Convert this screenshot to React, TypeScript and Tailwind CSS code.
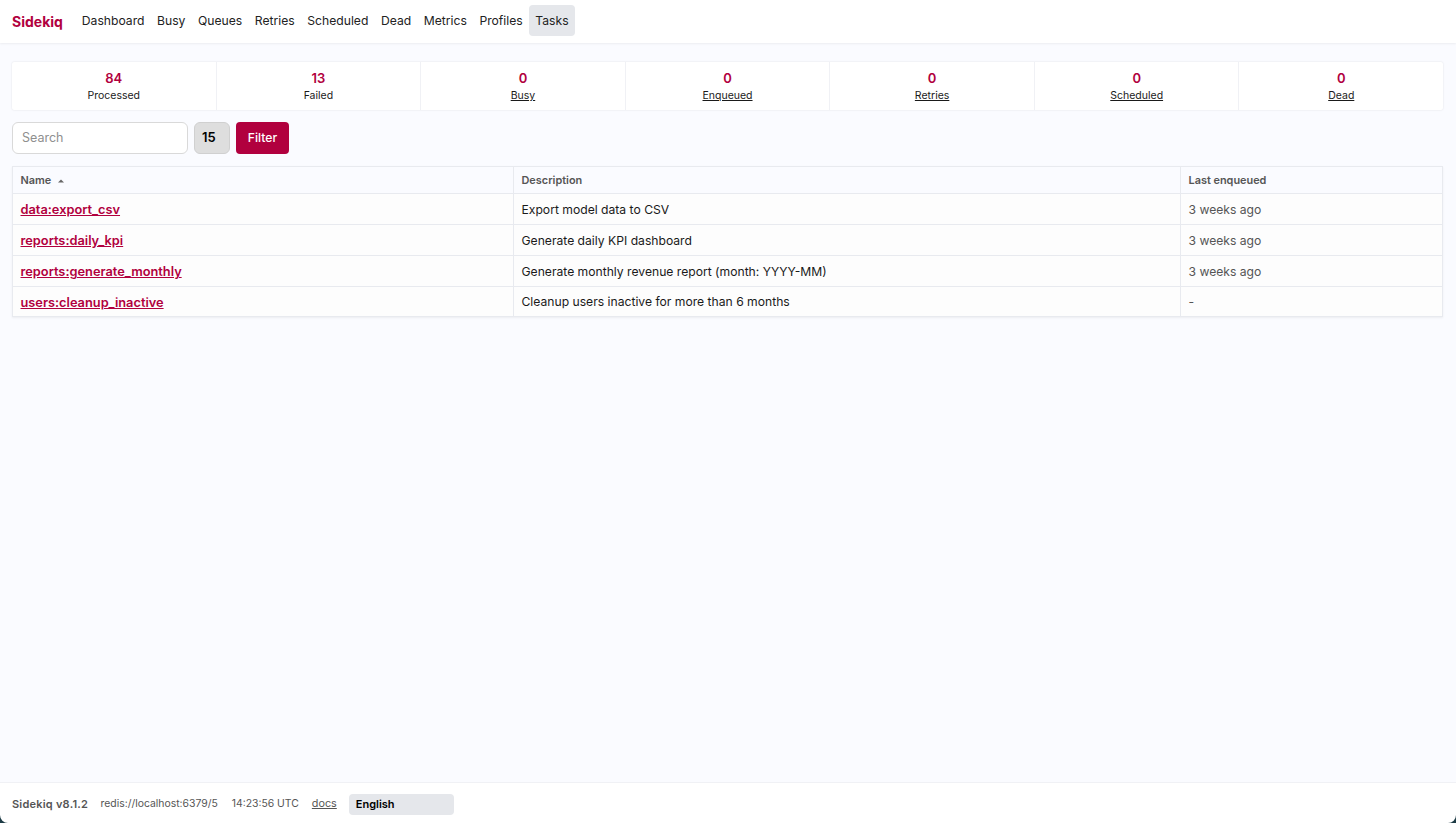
const navItems = ["Dashboard", "Busy", "Queues", "Retries", "Scheduled", "Dead", "Metrics", "Profiles"];

const stats = [
  { value: "84", label: "Processed", link: false },
  { value: "13", label: "Failed", link: false },
  { value: "0", label: "Busy", link: true },
  { value: "0", label: "Enqueued", link: true },
  { value: "0", label: "Retries", link: true },
  { value: "0", label: "Scheduled", link: true },
  { value: "0", label: "Dead", link: true },
];

const tasks = [
  { name: "data:export_csv", description: "Export model data to CSV", last: "3 weeks ago" },
  { name: "reports:daily_kpi", description: "Generate daily KPI dashboard", last: "3 weeks ago" },
  { name: "reports:generate_monthly", description: "Generate monthly revenue report (month: YYYY-MM)", last: "3 weeks ago" },
  { name: "users:cleanup_inactive", description: "Cleanup users inactive for more than 6 months", last: "-" },
];

export default function App() {
  return (
    <div className="relative flex h-[823px] flex-col overflow-hidden bg-[#fafbff] font-['Inter',sans-serif] text-[12.15px] text-[#1a1a1a]">
      <header className="flex h-[43px] items-center bg-white pb-[1px] pl-3 shadow-[0_1px_2px_rgba(0,0,0,0.06)]">
        <span className="mr-[12.7px] text-[14px] font-bold text-[#b1003e]">Sidekiq</span>
        <nav className="flex items-center">
          {navItems.map((item) => (
            <a key={item} className="px-[6.3px] py-2 text-[#222]">
              {item}
            </a>
          ))}
          <a className="flex h-[31px] items-center rounded bg-[#e5e7eb] px-[6.3px] text-[#222]">Tasks</a>
        </nav>
      </header>

      <main className="flex-1 pl-3 pr-[13px] pt-[19px]">
        <div className="flex h-[48px] rounded-[2px] bg-white shadow-[0_0_2px_rgba(0,0,0,0.12)]">
          {stats.map((stat) => (
            <div key={stat.label} className="flex flex-1 flex-col items-center justify-center border-r border-[#f0f1f5] last:border-r-0">
              <span className="pt-[1px] text-[13px] leading-[17px] font-semibold text-[#b1003e]">{stat.value}</span>
              <span className={`mt-[1px] text-[10.5px] leading-[15px] ${stat.link ? "underline" : ""}`}>{stat.label}</span>
            </div>
          ))}
        </div>

        <div className="mt-3 flex gap-1.5">
          <input
            placeholder="Search"
            className="h-8 w-[176px] rounded-md border border-[#d9d9d9] bg-white px-[9px] pb-[1px] text-[12.5px] placeholder:text-[#8f8f8f]"
          />
          <div className="flex h-8 w-9 items-center rounded-md border border-[#d0d0d0] bg-[#dedede] pl-[7px] text-[13px] font-semibold text-black">15</div>
          <button className="h-8 w-[53px] rounded bg-[#b1003e] text-[12.2px] font-medium text-white">Filter</button>
        </div>

        <table className="mt-3 w-full table-fixed border-collapse bg-[#fdfdfd] shadow-[0_1px_2px_rgba(0,0,0,0.06)]">
          <colgroup>
            <col className="w-[501px]" />
            <col className="w-[667px]" />
            <col />
          </colgroup>
          <thead>
            <tr className="h-[27px] text-left text-[10.9px] text-[#555]">
              <th className="border border-[#e8eaef] bg-[#fafbff] pl-[7.5px] font-semibold">
                Name
                <svg className="ml-[7px] inline-block align-middle" width="6" height="4" viewBox="0 0 6 4">
                  <path d="M3 0.5 L6 3.5 H0 Z" fill="#666" />
                </svg>
              </th>
              <th className="border border-[#e8eaef] bg-[#fafbff] pl-[7.5px] font-semibold">Description</th>
              <th className="border border-[#e8eaef] bg-[#fafbff] pl-[7.5px] font-semibold">Last enqueued</th>
            </tr>
          </thead>
          <tbody>
            {tasks.map((task) => (
              <tr key={task.name} className="h-[31px] last:h-[30px]">
                <td className="border border-[#e8eaef] pl-[7.5px] pt-[2px] text-[12.8px] font-semibold text-[#b1003e] underline">{task.name}</td>
                <td className="border border-[#e8eaef] pl-[7.5px] pt-[2px]">{task.description}</td>
                <td className="border border-[#e8eaef] pl-[7.5px] pt-[2px] text-[#555]">{task.last}</td>
              </tr>
            ))}
          </tbody>
        </table>
      </main>

      <footer className="flex h-[41px] items-center border-t border-[#f0f1f5] bg-white pl-3 pt-[2px] text-[10.4px] text-[#555]">
        <span className="mr-[12.5px] text-[11px] font-semibold tracking-[0.02em]">Sidekiq v8.1.2</span>
        <span className="mr-[14px]">redis://localhost:6379/5</span>
        <span className="mr-[13px]">14:23:56 UTC</span>
        <a className="mr-[12px] text-[10.8px] underline">docs</a>
        <div className="flex h-[21px] w-[105px] items-center rounded bg-[#e5e7eb] px-[7px] text-[11px] font-semibold text-black">English</div>
      </footer>

      <svg className="absolute bottom-0 left-0" width="8" height="8" viewBox="0 0 8 8">
        <path d="M0 0 A8 8 0 0 0 8 8 H0 Z" fill="#1d3b45" />
      </svg>
      <svg className="absolute bottom-0 right-0" width="8" height="8" viewBox="0 0 8 8">
        <path d="M8 0 A8 8 0 0 1 0 8 H8 Z" fill="#1d3b45" />
      </svg>
    </div>
  );
}
